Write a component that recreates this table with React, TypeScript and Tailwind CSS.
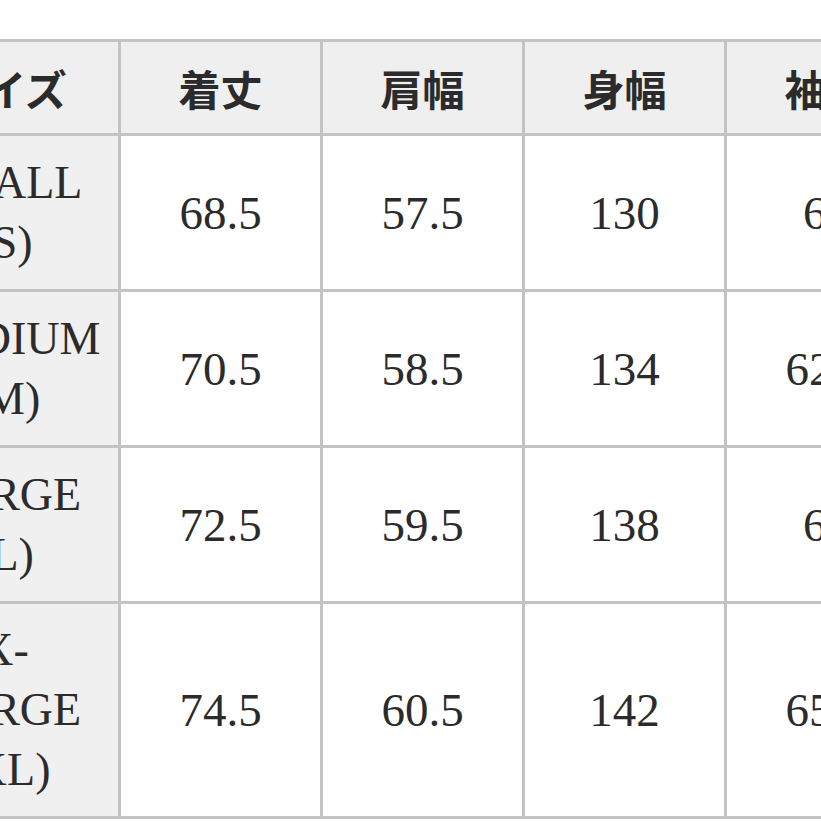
const headers = ['サイズ', '着丈', '肩幅', '身幅', '袖丈']

const rows = [
  { size: 'SMALL (S)', values: ['68.5', '57.5', '130', '61'], height: 'h-[156px]' },
  { size: 'MEDIUM (M)', values: ['70.5', '58.5', '134', '62.5'], height: 'h-[156px]' },
  { size: 'LARGE (L)', values: ['72.5', '59.5', '138', '64'], height: 'h-[156px]' },
  { size: 'X-LARGE (XL)', values: ['74.5', '60.5', '142', '65.5'], height: 'h-[215px]' },
]

const cell = 'border-[3px] border-[#c3c3c3] px-[17px] text-center align-middle'

export default function App() {
  return (
    <div className="h-[821px] w-[821px] overflow-hidden bg-white pt-[39px]">
      <table className="ml-[-112px] w-[1038px] min-w-[1038px] table-fixed border-collapse text-[#2b2b2b]">
        <colgroup>
          <col className="w-[230px]" />
          <col className="w-[202px]" />
          <col className="w-[202px]" />
          <col className="w-[202px]" />
          <col className="w-[202px]" />
        </colgroup>
        <thead>
          <tr className="h-[94px]">
            {headers.map((h) => (
              <th
                key={h}
                className={`${cell} bg-[#efefef] text-[42px] font-bold leading-[60px] font-['Noto_Sans_CJK_JP',sans-serif]`}
              >
                {h}
              </th>
            ))}
          </tr>
        </thead>
        <tbody>
          {rows.map((row) => (
            <tr key={row.size} className={row.height}>
              <td className={`${cell} bg-[#f0f0f0] text-[46px] leading-[60px] font-['Liberation_Serif',serif]`}>
                {row.size}
              </td>
              {row.values.map((v, i) => (
                <td key={i} className={`${cell} bg-white text-[47px] leading-[60px] font-['Liberation_Serif',serif]`}>
                  {v}
                </td>
              ))}
            </tr>
          ))}
        </tbody>
      </table>
    </div>
  )
}
